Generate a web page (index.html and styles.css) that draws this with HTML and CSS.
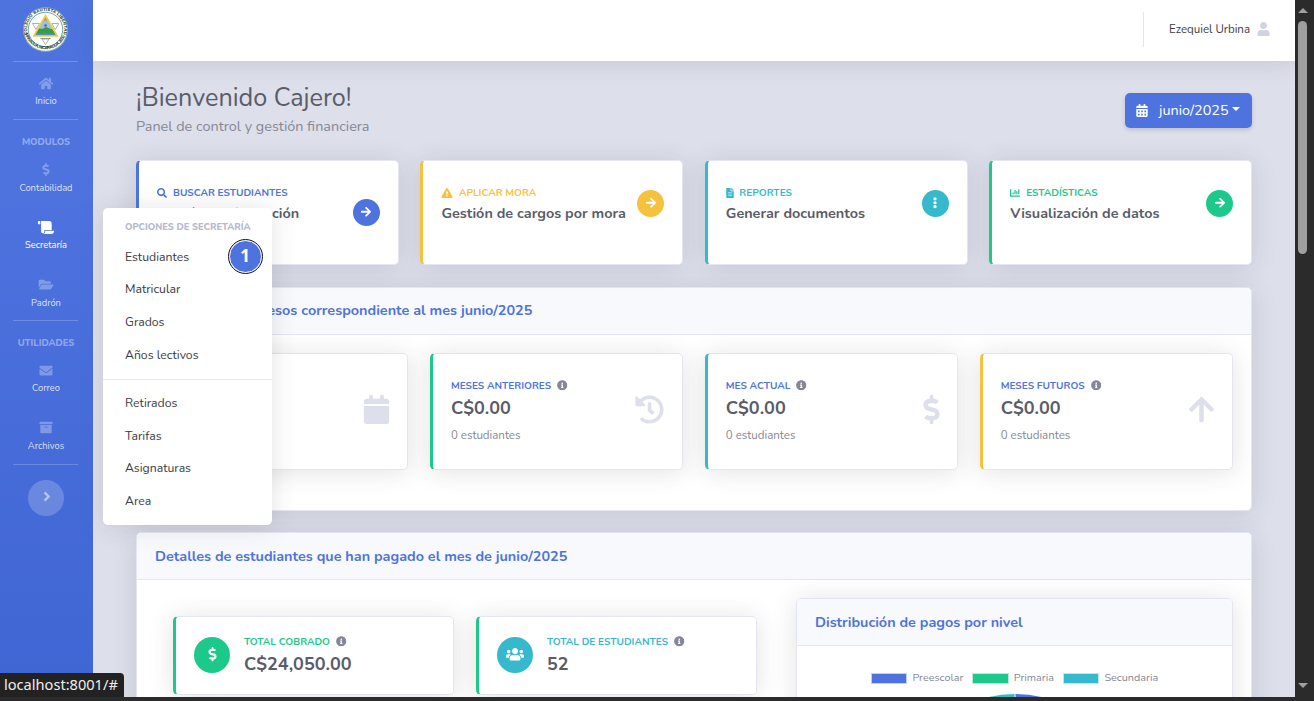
FILE: index.html
```html
<!DOCTYPE html>
<html lang="es">
<head>
<meta charset="utf-8">
<title>Panel de control</title>
<link rel="stylesheet" href="styles.css">
</head>
<body>
<svg class="sprite" aria-hidden="true">
  <symbol id="home" viewBox="0 0 576 512"><path d="M280.37 148.26L96 300.11V464a16 16 0 0 0 16 16l112.06-.29a16 16 0 0 0 15.92-16V368a16 16 0 0 1 16-16h64a16 16 0 0 1 16 16v95.64a16 16 0 0 0 16 16.05L464 480a16 16 0 0 0 16-16V300L295.67 148.26a12.19 12.19 0 0 0-15.3 0zM571.6 251.47L488 182.56V44.05a12 12 0 0 0-12-12h-56a12 12 0 0 0-12 12v72.61L318.47 43a48 48 0 0 0-61 0L4.34 251.47a12 12 0 0 0-1.6 16.9l25.5 31A12 12 0 0 0 45.15 301l235.22-193.74a12.19 12.19 0 0 1 15.3 0L530.9 301a12 12 0 0 0 16.9-1.6l25.5-31a12 12 0 0 0-1.7-16.93z"/></symbol>
  <symbol id="dollar" viewBox="0 0 288 512"><path d="M209.2 233.4l-108-31.6C88.7 198.2 80 186.5 80 173.5c0-16.3 13.2-29.5 29.5-29.5h66.3c12.2 0 24.2 3.7 34.2 10.5 6.1 4.1 14.3 3.1 19.5-2l34.8-34c7.1-6.9 6.1-18.4-1.8-24.5C238 74.8 207.4 64.1 176 64V16c0-8.8-7.2-16-16-16h-32c-8.8 0-16 7.2-16 16v48h-2.5C45.8 64-5.4 118.7.5 183.6c4.2 46.1 39.4 83.6 83.8 96.6l102.5 30c12.5 3.7 21.2 15.3 21.2 28.3 0 16.3-13.2 29.5-29.5 29.5h-66.3C100 368 88 364.3 78 357.5c-6.1-4.1-14.3-3.1-19.5 2l-34.8 34c-7.1 6.9-6.1 18.4 1.8 24.5 24.5 19.2 55.1 29.9 86.5 30v48c0 8.8 7.2 16 16 16h32c8.8 0 16-7.2 16-16v-48.2c46.6-.9 90.3-28.6 105.7-72.7 21.5-61.6-14.6-124.8-72.5-141.7z"/></symbol>
  <symbol id="scroll" viewBox="0 0 640 512"><path d="M48 0C21.53 0 0 21.53 0 48v64c0 8.84 7.16 16 16 16h80V48C96 21.53 74.47 0 48 0zm208 412.57V352h288V96c0-52.94-43.06-96-96-96H111.59C121.74 13.41 128 29.92 128 48v368c0 38.87 34.65 69.65 74.75 63.12C234.22 474 256 444.46 256 412.57zM288 384v32c0 52.93-43.06 96-96 96h336c61.86 0 112-50.14 112-112 0-8.84-7.16-16-16-16H288z"/></symbol>
  <symbol id="folder" viewBox="0 0 576 512"><path d="M572.694 292.093L500.27 416.248A63.997 63.997 0 0 1 444.989 448H45.025c-18.523 0-30.064-20.093-20.731-36.093l72.424-124.155A64 64 0 0 1 152 256h399.964c18.523 0 30.064 20.093 20.73 36.093zM152 224h328v-48c0-26.51-21.49-48-48-48H272l-64-64H48C21.49 64 0 85.49 0 112v278.046l69.077-118.418C86.214 242.25 117.989 224 152 224z"/></symbol>
  <symbol id="envelope" viewBox="0 0 512 512"><path d="M502.3 190.8c3.9-3.1 9.7-.2 9.7 4.7V400c0 26.5-21.5 48-48 48H48c-26.5 0-48-21.5-48-48V195.6c0-5 5.7-7.8 9.7-4.7 22.4 17.4 52.1 39.5 154.1 113.6 21.1 15.4 56.7 47.8 92.2 47.6 35.7.3 72-32.8 92.3-47.6 102-74.1 131.6-96.3 154-113.7zM256 320c23.2.4 56.6-29.2 73.4-41.4 132.7-96.3 142.8-104.7 173.4-128.7 5.8-4.5 9.2-11.5 9.2-18.9v-19c0-26.5-21.5-48-48-48H48c-26.5 0-48 21.5-48 48v19c0 7.4 3.4 14.3 9.2 18.9 30.6 23.9 40.7 32.4 173.4 128.7 16.8 12.2 50.2 41.8 73.4 41.4z"/></symbol>
  <symbol id="archive" viewBox="0 0 512 512"><path d="M32 448c0 17.7 14.3 32 32 32h384c17.7 0 32-14.3 32-32V160H32v288zm160-212c0-6.6 5.4-12 12-12h104c6.6 0 12 5.4 12 12v8c0 6.6-5.4 12-12 12H204c-6.6 0-12-5.4-12-12v-8zM480 32H32C14.3 32 0 46.3 0 64v48c0 8.8 7.2 16 16 16h480c8.8 0 16-7.2 16-16V64c0-17.7-14.3-32-32-32z"/></symbol>
  <symbol id="angle" viewBox="0 0 256 512"><path d="M224.3 273l-136 136c-9.4 9.4-24.6 9.4-33.9 0l-22.6-22.6c-9.4-9.4-9.4-24.6 0-33.9l96.4-96.4-96.4-96.4c-9.4-9.4-9.4-24.6 0-33.9L54.3 103c9.4-9.4 24.6-9.4 33.9 0l136 136c9.5 9.4 9.5 24.6.1 34z"/></symbol>
  <symbol id="user" viewBox="0 0 448 512"><path d="M224 256c70.7 0 128-57.3 128-128S294.7 0 224 0 96 57.3 96 128s57.3 128 128 128zm89.6 32h-16.7c-22.2 10.2-46.9 16-72.9 16s-50.6-5.8-72.9-16h-16.7C60.2 288 0 348.2 0 422.4V464c0 26.5 21.5 48 48 48h352c26.5 0 48-21.5 48-48v-41.6c0-74.2-60.2-134.4-134.4-134.4z"/></symbol>
  <symbol id="calendar-alt" viewBox="0 0 448 512"><path fill-rule="evenodd" d="M0 192h448v272c0 26.500-21.500 48-48 48H48c-26.500 0-48-21.500-48-48zM64 256v64h64v-64zM192 256v64h64v-64zM320 256v64h64v-64zM64 384v64h64v-64zM192 384v64h64v-64zM320 384v64h64v-64zM448 160H0v-48c0-26.500 21.500-48 48-48h48V16c0-8.800 7.200-16 16-16h32c8.800 0 16 7.200 16 16v48h128V16c0-8.800 7.200-16 16-16h32c8.800 0 16 7.200 16 16v48h48c26.500 0 48 21.500 48 48z"/></symbol>
  <symbol id="calendar" viewBox="0 0 448 512"><path d="M12 192h424c6.600 0 12 5.400 12 12v260c0 26.500-21.500 48-48 48H48c-26.500 0-48-21.500-48-48V204c0-6.600 5.400-12 12-12zm436-44v-36c0-26.500-21.500-48-48-48h-48V12c0-6.600-5.400-12-12-12h-40c-6.600 0-12 5.400-12 12v52H160V12c0-6.600-5.400-12-12-12h-40c-6.600 0-12 5.400-12 12v52H48C21.500 64 0 85.500 0 112v36c0 6.600 5.400 12 12 12h424c6.600 0 12-5.400 12-12z"/></symbol>
  <symbol id="search" viewBox="0 0 512 512"><path d="M505 442.7L405.3 343c-4.5-4.5-10.6-7-17-7H372c27.6-35.3 44-79.7 44-128C416 93.1 322.9 0 208 0S0 93.1 0 208s93.1 208 208 208c48.3 0 92.7-16.4 128-44v16.3c0 6.4 2.5 12.500 7 17l99.700 99.700c9.400 9.400 24.600 9.400 33.900 0l28.300-28.300c9.400-9.400 9.400-24.600.1-34zM208 336c-70.700 0-128-57.200-128-128 0-70.700 57.200-128 128-128 70.700 0 128 57.200 128 128 0 70.700-57.200 128-128 128z"/></symbol>
  <symbol id="warning" viewBox="0 0 576 512"><path d="M569.517 440.013C587.975 472.007 564.806 512 527.94 512H48.054c-36.937 0-59.999-40.055-41.577-71.987L246.423 23.985c18.467-32.009 64.72-31.951 83.154 0l239.94 416.028zM288 354c-25.405 0-46 20.595-46 46s20.595 46 46 46 46-20.595 46-46-20.595-46-46-46zm-43.673-165.346l7.418 136c.347 6.364 5.609 11.346 11.982 11.346h48.546c6.373 0 11.635-4.982 11.982-11.346l7.418-136c.375-6.874-5.098-12.654-11.982-12.654h-63.383c-6.884 0-12.356 5.78-11.981 12.654z"/></symbol>
  <symbol id="file" viewBox="0 0 384 512"><path d="M224 136V0H24C10.7 0 0 10.7 0 24v464c0 13.3 10.7 24 24 24h336c13.3 0 24-10.7 24-24V160H248c-13.2 0-24-10.8-24-24zm64 236c0 6.6-5.4 12-12 12H108c-6.6 0-12-5.4-12-12v-8c0-6.6 5.4-12 12-12h168c6.6 0 12 5.4 12 12v8zm0-64c0 6.6-5.4 12-12 12H108c-6.6 0-12-5.4-12-12v-8c0-6.6 5.4-12 12-12h168c6.6 0 12 5.4 12 12v8zm0-72v8c0 6.6-5.4 12-12 12H108c-6.6 0-12-5.4-12-12v-8c0-6.6 5.4-12 12-12h168c6.6 0 12 5.4 12 12zm96-114.1v6.1H256V0h6.1c6.4 0 12.5 2.5 17 7l97.9 98c4.5 4.5 7 10.6 7 16.9z"/></symbol>
  <symbol id="chart" viewBox="0 0 512 512"><path d="M332.8 320h38.4c6.4 0 12.8-6.4 12.8-12.8V172.8c0-6.4-6.4-12.8-12.8-12.8h-38.4c-6.4 0-12.8 6.4-12.8 12.8v134.4c0 6.4 6.4 12.8 12.8 12.8zm96 0h38.4c6.4 0 12.8-6.4 12.8-12.8V76.8c0-6.4-6.4-12.8-12.8-12.8h-38.4c-6.4 0-12.8 6.4-12.8 12.8v230.4c0 6.4 6.4 12.8 12.8 12.8zm-288 0h38.4c6.4 0 12.8-6.4 12.8-12.8v-70.4c0-6.4-6.4-12.8-12.8-12.8h-38.4c-6.4 0-12.8 6.4-12.8 12.8v70.4c0 6.4 6.4 12.8 12.8 12.8zm96 0h38.4c6.4 0 12.8-6.4 12.8-12.8V108.8c0-6.4-6.4-12.8-12.8-12.8h-38.4c-6.4 0-12.8 6.4-12.8 12.8v198.4c0 6.4 6.4 12.8 12.8 12.8zM496 384H64V80c0-8.84-7.16-16-16-16H16C7.16 64 0 71.16 0 80v336c0 17.67 14.33 32 32 32h464c8.84 0 16-7.16 16-16v-32c0-8.84-7.16-16-16-16z"/></symbol>
  <symbol id="arrow" viewBox="0 0 448 512"><path d="M190.5 66.9l22.2-22.2c9.4-9.4 24.6-9.4 33.9 0L441 239c9.4 9.4 9.4 24.6 0 33.9L246.6 467.3c-9.4 9.4-24.6 9.4-33.9 0l-22.2-22.2c-9.5-9.5-9.3-25 .4-34.3L311.4 296H24c-13.3 0-24-10.7-24-24v-32c0-13.3 10.7-24 24-24h287.4L190.9 101.2c-9.8-9.3-10-24.8-.4-34.3z"/></symbol>
  <symbol id="ellipsis" viewBox="0 0 192 512"><path d="M96 184c39.8 0 72 32.2 72 72s-32.2 72-72 72-72-32.2-72-72 32.2-72 72-72zM24 80c0 39.8 32.2 72 72 72s72-32.2 72-72S135.800 8 96 8 24 40.200 24 80zm0 352c0 39.800 32.200 72 72 72s72-32.200 72-72-32.200-72-72-72-72 32.200-72 72z"/></symbol>
  <symbol id="info" viewBox="0 0 512 512"><path d="M256 8C119.043 8 8 119.083 8 256c0 136.997 111.043 248 248 248s248-111.003 248-248C504 119.083 392.957 8 256 8zm0 110c23.196 0 42 18.804 42 42s-18.804 42-42 42-42-18.804-42-42 18.804-42 42-42zm56 254c0 6.627-5.373 12-12 12h-88c-6.627 0-12-5.373-12-12v-24c0-6.627 5.373-12 12-12h12v-64h-12c-6.627 0-12-5.373-12-12v-24c0-6.627 5.373-12 12-12h64c6.627 0 12 5.373 12 12v100h12c6.627 0 12 5.373 12 12v24z"/></symbol>
  <symbol id="history" viewBox="0 0 512 512"><path d="M504 255.531c.253 136.640-111.180 248.372-247.820 248.468-59.015.042-113.223-20.530-155.822-54.911-11.077-8.940-11.905-25.541-1.839-35.607l11.267-11.267c8.609-8.609 22.353-9.551 31.891-1.984C173.062 425.135 212.781 440 256 440c101.705 0 184-82.311 184-184 0-101.705-82.311-184-184-184-48.814 0-93.149 18.969-126.068 49.932l50.754 50.754c10.080 10.080 2.941 27.314-11.313 27.314H24c-8.837 0-16-7.163-16-16V38.627c0-14.254 17.234-21.393 27.314-11.314l49.372 49.372C129.209 34.136 189.552 8 256 8c136.810 0 247.747 110.780 248 247.531zm-180.912 78.784l9.823-12.630c8.138-10.463 6.253-25.542-4.210-33.679L288 256.349V152c0-13.255-10.745-24-24-24h-16c-13.255 0-24 10.745-24 24v135.651l65.409 50.874c10.463 8.137 25.541 6.253 33.679-4.210z"/></symbol>
  <symbol id="users" viewBox="0 0 640 512"><path d="M96 224c35.3 0 64-28.7 64-64s-28.7-64-64-64-64 28.7-64 64 28.7 64 64 64zm448 0c35.3 0 64-28.7 64-64s-28.7-64-64-64-64 28.7-64 64 28.7 64 64 64zm32 32h-64c-17.6 0-33.5 7.1-45.1 18.6 40.3 22.1 68.9 62 75.1 109.4h66c17.7 0 32-14.3 32-32v-32c0-35.3-28.7-64-64-64zm-256 0c61.9 0 112-50.1 112-112S381.9 32 320 32 208 82.1 208 144s50.1 112 112 112zm76.8 32h-8.3c-20.8 10-43.9 16-68.5 16s-47.6-6-68.5-16h-8.3C179.6 288 128 339.6 128 403.2V432c0 26.5 21.5 48 48 48h288c26.5 0 48-21.5 48-48v-28.8c0-63.6-51.6-115.2-115.2-115.2zm-223.7-13.4C161.5 263.1 145.6 256 128 256H64c-35.3 0-64 28.7-64 64v32c0 17.7 14.3 32 32 32h65.900c6.300-47.400 34.900-87.300 75.200-109.400z"/></symbol>
</svg>

<div class="window">
  <div class="page">
    <nav class="sidebar">
      <svg class="logo" viewBox="0 0 45 45">
        <defs>
          <path id="ring-top" d="M4.600 27.500A18.600 18.600 0 1 1 40.400 27.500"/>
          <path id="ring-bottom" d="M2.200 26.500A21 21 0 0 0 42.800 26.500"/>
          <clipPath id="tri"><path d="M22.500 9.500L33.500 28.500H11.500z"/></clipPath>
        </defs>
        <circle cx="22.500" cy="22.500" r="22.300" fill="#f6f8f2"/>
        <circle cx="22.500" cy="22.500" r="21.900" fill="none" stroke="#4f8f86" stroke-width=".8"/>
        <circle cx="22.500" cy="22.500" r="17.200" fill="#fff" stroke="#4f9a8c" stroke-width=".8"/>
        <text class="ring"><textPath href="#ring-top" textLength="68">COLEGIO BAUTISTA LIBERTAD</textPath></text>
        <text class="ring"><textPath href="#ring-bottom" textLength="52">MANAGUA, NICARAGUA, 2000</textPath></text>
        <path d="M9.500 16.500h7l-3.500 6zM28.800 16.500h7l-3.500 6zM19 32h7l-3.500 5.500z" fill="#fff" stroke="#8a9094" stroke-width=".7"/>
        <path d="M17.500 31.500h10.500" stroke="#777" stroke-width="1.200" stroke-dasharray="1.200 .5"/>
        <g clip-path="url(#tri)">
          <path d="M10 8h25v22H10z" fill="#8cc5ee"/>
          <path d="M16 16q6.500-5 13 0V8H16z" fill="#e58c55"/>
          <path d="M10 23l5-2 4 1 4-2 5 2 6 1v5H10z" fill="#3d9a3f"/>
          <path d="M10 26.500h25v3H10z" fill="#4a8fd0"/>
          <circle cx="22.500" cy="18.500" r="1.200" fill="#d42d43"/>
        </g>
        <path d="M22.500 8.500L34.200 29H10.800z" fill="none" stroke="#e9cf45" stroke-width="1.600"/>
      </svg>
      <hr class="rule rule-first">
      <a class="nav-item nav-home"><svg class="ico"><use href="#home"/></svg><span>Inicio</span></a>
      <hr class="rule">
      <h6 class="nav-heading">MODULOS</h6>
      <a class="nav-item"><svg class="ico"><use href="#dollar"/></svg><span>Contabilidad</span></a>
      <a class="nav-item active"><svg class="ico"><use href="#scroll"/></svg><span>Secretaría</span></a>
      <a class="nav-item"><svg class="ico"><use href="#folder"/></svg><span>Padrón</span></a>
      <hr class="rule rule-tight">
      <h6 class="nav-heading">UTILIDADES</h6>
      <a class="nav-item"><svg class="ico"><use href="#envelope"/></svg><span>Correo</span></a>
      <a class="nav-item"><svg class="ico"><use href="#archive"/></svg><span>Archivos</span></a>
      <hr class="rule rule-last">
      <button class="toggle"><svg class="ico"><use href="#angle"/></svg></button>
    </nav>

    <main class="content">
      <header class="topbar">
        <span class="topbar-divider"></span>
        <span class="username">Ezequiel Urbina</span>
        <svg class="avatar"><use href="#user"/></svg>
      </header>

      <div class="container">
        <div class="heading">
          <div>
            <h1 class="title">¡Bienvenido Cajero!</h1>
            <p class="subtitle">Panel de control y gestión financiera</p>
          </div>
          <button class="month"><svg class="month-ico"><use href="#calendar-alt"/></svg><span>junio/2025</span><i class="caret"></i></button>
        </div>

        <section class="row actions">
          <article class="card blue">
            <div><h6 class="label"><svg class="label-ico"><use href="#search"/></svg>BUSCAR ESTUDIANTES</h6><p class="action-name">Padrón e información académica</p></div>
            <span class="dot"><svg><use href="#arrow"/></svg></span>
          </article>
          <article class="card yellow">
            <div><h6 class="label"><svg class="label-ico wide"><use href="#warning"/></svg>APLICAR MORA</h6><p class="action-name">Gestión de cargos por mora</p></div>
            <span class="dot"><svg><use href="#arrow"/></svg></span>
          </article>
          <article class="card teal">
            <div><h6 class="label"><svg class="label-ico slim"><use href="#file"/></svg>REPORTES</h6><p class="action-name">Generar documentos</p></div>
            <span class="dot"><svg><use href="#ellipsis"/></svg></span>
          </article>
          <article class="card green">
            <div><h6 class="label"><svg class="label-ico"><use href="#chart"/></svg>ESTADÍSTICAS</h6><p class="action-name">Visualización de datos</p></div>
            <span class="dot"><svg><use href="#arrow"/></svg></span>
          </article>
        </section>

        <section class="panel income">
          <h6 class="panel-head">Resumen de ingresos correspondiente al mes junio/2025</h6>
          <div class="row stats">
            <article class="card blue">
              <div><h6 class="label indigo">TOTAL PAGADO<svg class="info"><use href="#info"/></svg></h6><p class="amount">C$0.00</p><p class="count">0 estudiantes</p></div>
              <svg class="stat-ico"><use href="#calendar"/></svg>
            </article>
            <article class="card green">
              <div><h6 class="label indigo">MESES ANTERIORES<svg class="info"><use href="#info"/></svg></h6><p class="amount">C$0.00</p><p class="count">0 estudiantes</p></div>
              <svg class="stat-ico stat-history"><use href="#history"/></svg>
            </article>
            <article class="card teal">
              <div><h6 class="label indigo">MES ACTUAL<svg class="info"><use href="#info"/></svg></h6><p class="amount">C$0.00</p><p class="count">0 estudiantes</p></div>
              <svg class="stat-ico stat-dollar"><use href="#dollar"/></svg>
            </article>
            <article class="card yellow">
              <div><h6 class="label indigo">MESES FUTUROS<svg class="info"><use href="#info"/></svg></h6><p class="amount">C$0.00</p><p class="count">0 estudiantes</p></div>
              <svg class="stat-ico stat-up"><use href="#arrow"/></svg>
            </article>
          </div>
        </section>

        <section class="panel details">
          <h6 class="panel-head">Detalles de estudiantes que han pagado el mes de junio/2025</h6>
          <div class="details-body">
            <article class="card green total">
              <span class="disc"><svg><use href="#dollar"/></svg></span>
              <div><h6 class="label">TOTAL COBRADO<svg class="info"><use href="#info"/></svg></h6><p class="amount">C$24,050.00</p></div>
            </article>
            <article class="card green total">
              <span class="disc disc-teal"><svg class="disc-users"><use href="#users"/></svg></span>
              <div><h6 class="label label-teal">TOTAL DE ESTUDIANTES<svg class="info"><use href="#info"/></svg></h6><p class="amount">52</p></div>
            </article>
            <article class="panel chart-panel">
              <h6 class="panel-head">Distribución de pagos por nivel</h6>
              <ul class="legend">
                <li><i class="swatch"></i>Preescolar</li>
                <li><i class="swatch swatch-green"></i>Primaria</li>
                <li><i class="swatch swatch-teal"></i>Secundaria</li>
              </ul>
              <svg class="pie" viewBox="0 0 240 240">
                <path d="M120 120V0A120 120 0 0 1 220 186z" fill="#4e73df"/>
                <path d="M120 120L220 186A120 120 0 0 1 20 186z" fill="#1cc88a"/>
                <path d="M120 120L20 186A120 120 0 0 1 120 0z" fill="#36b9cc"/>
                <path d="M120 0v120" stroke="#fff"/>
              </svg>
            </article>
          </div>
        </section>
      </div>
    </main>
  </div>

  <div class="scrollbar"><i class="arrow-up"></i><span class="thumb"></span><i class="arrow-down"></i></div>

  <div class="submenu">
    <h6 class="submenu-head">OPCIONES DE SECRETARÍA</h6>
    <a>Estudiantes</a><a>Matricular</a><a>Grados</a><a>Años lectivos</a>
    <hr>
    <a>Retirados</a><a>Tarifas</a><a>Asignaturas</a><a>Area</a>
    <span class="step">1</span>
  </div>
  <div class="status">localhost:8001/#</div>
</div>
</body>
</html>
```
FILE: styles.css
```css
* { box-sizing: border-box; }
body {
  margin: 0;
  overflow: hidden;
  font-family: Nunito, "Noto Sans", "Open Sans", sans-serif;
  font-size: 14.4px;
  color: #858796;
}
h1, h6, p, ul { margin: 0; padding: 0; }
svg { display: block; fill: currentColor; flex: none; }
.sprite { position: absolute; width: 0; height: 0; }

.window {
  position: relative;
  display: grid;
  grid-template-columns: 1295px 1fr;
  height: 701px;
  padding-bottom: 4px;
  background: #2b2b2b;
  overflow: hidden;
}
.page { display: flex; height: 697px; overflow: hidden; background: #dddfeb; }

/* Sidebar */
.sidebar {
  flex: none;
  width: 93px;
  height: 1750px;
  padding-top: 7px;
  display: flex;
  flex-direction: column;
  align-items: center;
  color: #fff;
  background: linear-gradient(180deg, #4e73df 10%, #224abe 100%);
}
.logo { width: 45px; height: 45px; margin-right: 2px; }
.ring { font: bold 4.2px "Liberation Sans", sans-serif; fill: #1c2b2b; }
.rule { width: 65px; height: 1px; margin: 11px 2px 0 0; border: 0; flex: none; background: rgba(255, 255, 255, .2); }
.rule-first { margin-top: 9px; }
.rule-tight { margin-top: -8px; }
.rule-last { margin-top: -7px; }
.nav-heading {
  margin: 14px 1px 5px 0;
  font-size: 9.36px;
  line-height: 16px;
  font-weight: 800;
  color: rgba(255, 255, 255, .4);
}
.nav-item { display: flex; flex-direction: column; align-items: center; height: 57.5px; margin-right: 1px; padding-top: 8px; font-size: 9.36px; line-height: 14px; color: rgba(255, 255, 255, .8); }
.nav-item span { margin-top: 4.5px; }
.nav-home { height: 46px; padding-top: 15px; }
.nav-home span { margin-top: 4px; }
.nav-item .ico { width: 18px; height: 13px; color: rgba(255, 255, 255, .3); }
.nav-item.active, .nav-item.active .ico { color: #fff; }
.toggle {
  display: grid;
  place-items: center;
  width: 36px;
  height: 36px;
  margin: 15px 1px 0 0;
  padding: 0;
  border: 0;
  border-radius: 50%;
  background: rgba(255, 255, 255, .2);
  color: rgba(255, 255, 255, .5);
}
.toggle .ico { width: 8px; height: 15px; margin: 0 0 3px 1px; }

/* Top bar */
.content { flex: 1; min-width: 0; }
.topbar {
  display: flex;
  align-items: center;
  justify-content: flex-end;
  height: 61px;
  padding: 0 25px 3px 0;
  background: #fff;
  box-shadow: 0 2px 25px rgba(58, 59, 69, .15);
}
.topbar-divider { width: 1px; height: 35px; margin-right: 25px; background: #e3e6f0; }
.username { font-size: 11.52px; color: #3a3b45; }
.avatar { width: 13px; height: 14px; margin-left: 7px; color: #d1d3e2; }

/* Heading */
.container { padding: 21px 43px 0; }
.heading { display: flex; justify-content: space-between; align-items: center; height: 56px; }
.title { font-size: 25.2px; line-height: 30px; font-weight: 400; color: #5a5c69; }
.subtitle { margin: 3px 0 1px; line-height: 20px; }
.month {
  display: flex;
  align-items: center;
  height: 35px;
  width: 127px;
  padding: 0 11px;
  border: 0;
  border-radius: 5px;
  background: #4e73df;
  color: #fff;
  font: inherit;
  box-shadow: 0 2px 4px rgba(58, 59, 69, .2);
}
.month-ico { width: 12px; height: 13px; margin-right: 11px; }
.caret { margin: -2px 0 0 3px; border: 4px solid transparent; border-top-color: #fff; border-bottom: 0; }

/* Cards */
.row { display: grid; grid-template-columns: repeat(4, 1fr); gap: 21.6px; }
.card {
  --accent: #4e73df;
  display: flex;
  justify-content: space-between;
  border: 1px solid #e3e6f0;
  border-left: 3px solid var(--accent);
  border-radius: 5px;
  background: #fff;
  box-shadow: 0 2px 25px rgba(58, 59, 69, .15);
}
.yellow { --accent: #f6c23e; }
.teal { --accent: #36b9cc; }
.green { --accent: #1cc88a; }
.label { display: flex; align-items: center; height: 14px; font-size: 10.08px; line-height: 14px; font-weight: 700; color: var(--accent); white-space: nowrap; }
.label-ico { width: 10px; height: 10px; margin-right: 6px; }
.label-ico.wide { width: 12px; margin-right: 5.5px; }
.label-ico.slim { width: 8px; margin-right: 5.5px; }
.indigo { color: #4e73df; }
.label-teal { color: #36b9cc; }
.info { width: 10.5px; height: 10.5px; margin: -1px 0 0 6px; color: #858796; }

.actions { margin-top: 22px; }
.actions .card { height: 105px; padding: 25px 18px; align-items: flex-start; }
.actions .card.blue .dot { margin-top: 13px; }
.action-name { width: 190px; margin-top: 4px; font-size: 14.4px; line-height: 18px; font-weight: 700; color: #5a5c69; }
.dot { display: grid; place-items: center; flex: none; width: 27px; height: 27px; margin: 4px 0 0 -10px; border-radius: 50%; background: var(--accent); color: #fff; }
.dot svg { width: 10px; height: 11.5px; margin-bottom: 1px; }

.panel {
  border: 1px solid #e3e6f0;
  border-radius: 5px;
  background: #fff;
  box-shadow: 0 2px 25px rgba(58, 59, 69, .15);
  overflow: hidden;
}
.panel-head { height: 47px; padding: 0 18px; border-bottom: 1px solid #e3e6f0; background: #f8f9fc; font-size: 14.4px; line-height: 46px; font-weight: 700; color: #4e73df; }
.income { height: 224px; margin-top: 22px; }
.income .panel-head { line-height: 44px; }
.stats { padding: 18px; }
.stats .card { height: 117px; padding: 25px 18px; }
.amount { margin-top: 4px; font-size: 18px; line-height: 22px; font-weight: 700; color: #5a5c69; }
.count { margin-top: 8px; font-size: 11.52px; line-height: 16px; }
.stat-ico { width: 27px; height: 29px; margin-top: 16px; margin-right: -1px; color: #dddfeb; }
.stat-history { width: 29px; margin-right: 0; }
.stat-dollar { width: 17px; }
.stat-up { transform: rotate(-90deg); }

.details { height: 600px; margin-top: 21px; }
.details-body { display: grid; grid-template-columns: 281px 281px 437px; column-gap: 22px; align-items: start; padding: 18px 18px 0 36px; }
.total { height: 79px; margin-top: 18px; padding: 18px; justify-content: flex-start; }
.disc { display: grid; place-items: center; width: 36px; height: 36px; margin: 2px 14px 0 0; border-radius: 50%; background: #1cc88a; color: #fff; }
.disc-teal { background: #36b9cc; }
.disc svg { width: 13px; height: 14.4px; margin-bottom: 1px; }
.disc .disc-users { width: 18px; }
.chart-panel { height: 420px; margin-left: 17px; width: 437px; }
.legend { display: flex; justify-content: center; gap: 9px; margin-top: 25px; list-style: none; font-size: 10.8px; line-height: 14px; }
.legend li { display: flex; align-items: center; }
.swatch { width: 36.5px; height: 11px; margin-right: 5px; border: 1px solid #c3cff5; background: #4e73df; }
.swatch-green { background: #1cc88a; border-color: #b4eed9; }
.swatch-teal { background: #36b9cc; border-color: #bce8ee; }
.pie { width: 240px; height: 240px; margin: 9px auto 0; }

/* Overlays */
.submenu {
  position: absolute;
  left: 103px;
  top: 208px;
  width: 169px;
  height: 317px;
  padding-top: 10px;
  border-radius: 5px;
  background: #fff;
  box-shadow: 0 2px 25px rgba(58, 59, 69, .15);
}
.submenu-head { padding-left: 22px; margin-bottom: 4.5px; font-size: 9.36px; line-height: 18px; font-weight: 800; color: #b7b9cc; white-space: nowrap; }
.submenu a { display: block; padding-left: 22px; font-size: 12.24px; line-height: 32.7px; color: #3a3b45; }
.submenu hr { height: 1px; margin: 7.5px 0 7px; border: 0; background: #e6e8ef; }
.step {
  position: absolute;
  left: 125.5px;
  top: 31.5px;
  width: 33px;
  height: 33px;
  border: 1px solid #fff;
  border-radius: 50%;
  outline: 1.5px solid #111;
  background: #4e73df;
  color: #fff;
  font-family: "Noto Sans", sans-serif;
  font-size: 17px;
  line-height: 30px;
  font-weight: 700;
  text-align: center;
}
.status {
  position: absolute;
  left: 0;
  bottom: 4px;
  width: 124px;
  height: 24px;
  padding-left: 4px;
  border-top-right-radius: 4px;
  background: #222;
  color: #eee;
  font-family: "Noto Sans", sans-serif;
  font-size: 14.6px;
  line-height: 23px;
}
.scrollbar { display: flex; flex-direction: column; align-items: center; width: 15px; height: 697px; padding: 8px 0 9px; }
.arrow-up { border: 5px solid transparent; border-top: 0; border-bottom-color: #9f9f9f; }
.thumb { width: 9px; height: 233px; margin: 8px 0 auto; border-radius: 5px; background: #9f9f9f; }
.arrow-down { border: 5px solid transparent; border-bottom: 0; border-top-color: #9f9f9f; }
```
